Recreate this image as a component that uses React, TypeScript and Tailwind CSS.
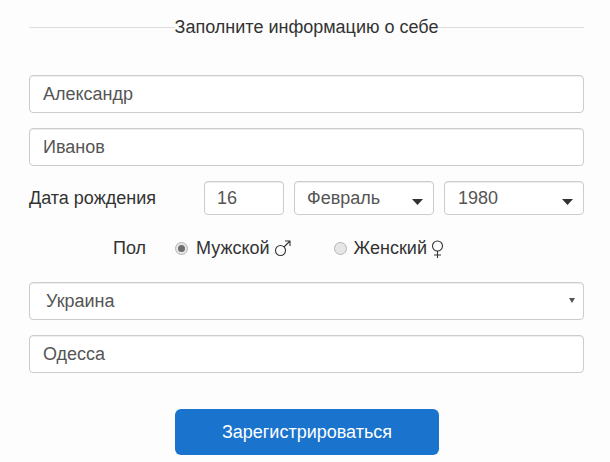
import React from 'react';

const boxClass =
  'flex items-center border border-[#ccc] rounded-[4px] bg-white text-[18px] text-[#555] shadow-[inset_0_1px_1px_rgba(0,0,0,0.075)]';

function Arrow({ className }: { className: string }) {
  return (
    <svg className={className} width="11" height="6" viewBox="0 0 11 6">
      <path d="M0 0h11L5.5 6z" fill="#333" />
    </svg>
  );
}

function Radio({ checked }: { checked?: boolean }) {
  return (
    <span className="w-[13px] h-[13px] rounded-full border border-[#b5b5b5] bg-[#e6e6e6] flex items-center justify-center">
      {checked && <span className="w-[7px] h-[7px] rounded-full bg-[#6f6f6f]" />}
    </span>
  );
}

function MaleIcon() {
  return (
    <svg width="17" height="17" viewBox="0 0 17 17" fill="none" stroke="#333" strokeWidth="1.1">
      <circle cx="6.5" cy="10.5" r="5" />
      <path d="M10 7l6-6M11 1h5v5" />
    </svg>
  );
}

function FemaleIcon() {
  return (
    <svg width="13" height="18" viewBox="0 0 13 18" fill="none" stroke="#333" strokeWidth="1.1">
      <circle cx="6.5" cy="6" r="5" />
      <path d="M6.5 11v7M3 15h7" />
    </svg>
  );
}

export default function App() {
  return (
    <div className="w-[610px] h-[462px] overflow-hidden bg-[#fdfdfd] pl-[29px] pr-[26px] pt-[16px] font-['Liberation_Sans',Arial,sans-serif] text-[#333]">
      {/* Title */}
      <div className="flex items-center h-[22px] text-[18px]">
        <div className="flex-1 h-px bg-[#ddd]" />
        <span className="text-center whitespace-nowrap">Заполните информацию о себе</span>
        <div className="flex-1 h-px bg-[#ddd]" />
      </div>

      <div className={`${boxClass} h-[38px] mt-[37px] px-[13px]`}>Александр</div>
      <div className={`${boxClass} h-[38px] mt-[15px] px-[13px]`}>Иванов</div>

      {/* Birth date */}
      <div className="flex items-center h-[34px] mt-[15px]">
        <span className="w-[175px] text-[18px] text-[#333]">Дата рождения</span>
        <div className={`${boxClass} w-[80px] h-full px-[12px]`}>16</div>
        <div className={`${boxClass} w-[140px] h-full ml-[10px] pl-[12px] pr-[10px] justify-between`}>
          Февраль
          <Arrow className="mt-[8px]" />
        </div>
        <div className={`${boxClass} w-[140px] h-full ml-[10px] pl-[13px] pr-[10px] justify-between`}>
          1980
          <Arrow className="mt-[8px]" />
        </div>
      </div>

      {/* Gender */}
      <div className="flex items-center h-[22px] mt-[22px] text-[18px]">
        <span className="ml-[84px] w-[62px] mt-[1px]">Пол</span>
        <Radio checked />
        <span className="ml-[8px] mt-[1px]">Мужской</span>
        <span className="ml-[4px] mt-[1px]"><MaleIcon /></span>
        <span className="ml-[43px]"><Radio /></span>
        <span className="ml-[7px] mt-[1px]">Женский</span>
        <span className="ml-[4px] mt-[1px]"><FemaleIcon /></span>
      </div>

      <div className={`${boxClass} h-[38px] mt-[23px] pl-[16px] pr-[8px] justify-between`}>
        Украина
        <svg width="6" height="6" viewBox="0 0 6 6" className="mb-[2px]">
          <path d="M0 1h6L3 6z" fill="#555" />
        </svg>
      </div>
      <div className={`${boxClass} h-[38px] mt-[15px] px-[13px]`}>Одесса</div>

      <div className="flex justify-center mt-[36px] pl-[1px]">
        <button className="w-[264px] h-[46px] rounded-[6px] bg-[#1a73cd] text-white text-[18px]">
          Зарегистрироваться
        </button>
      </div>
    </div>
  );
}
